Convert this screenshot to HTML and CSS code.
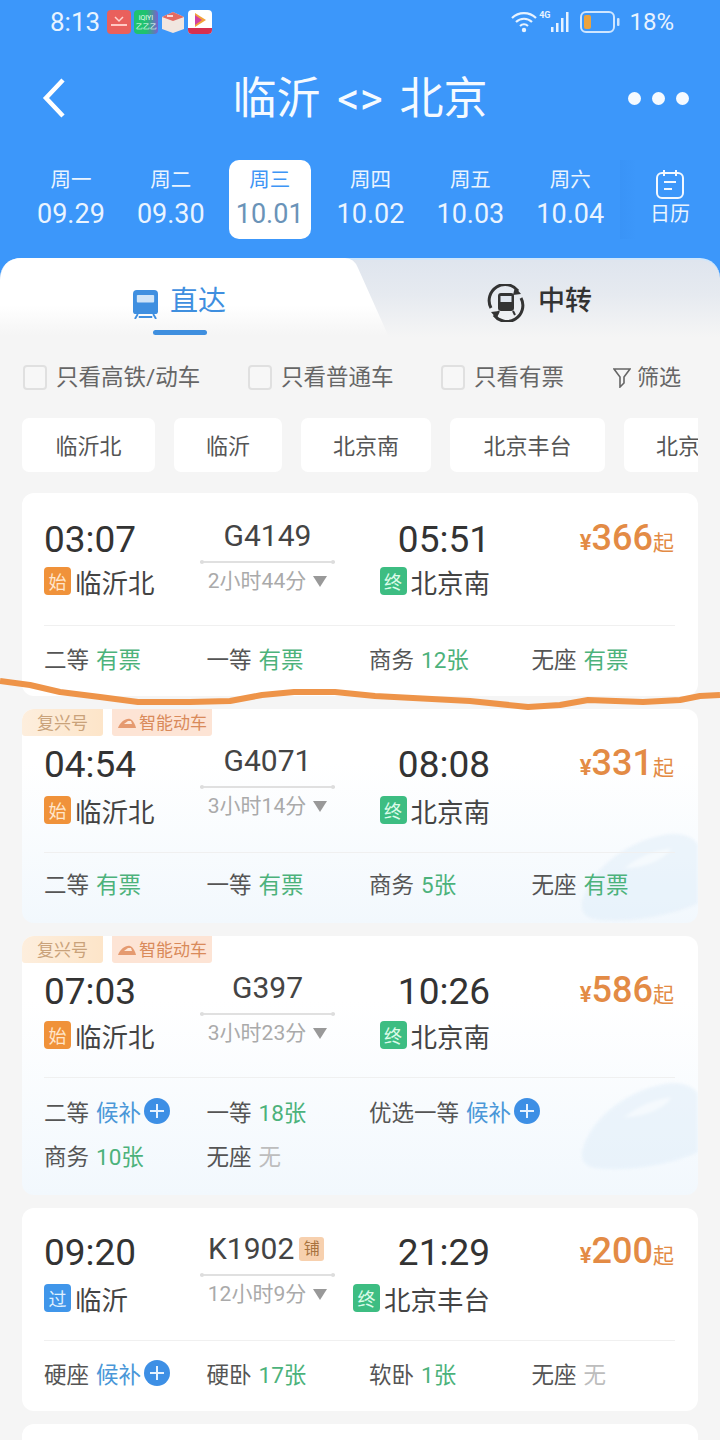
FILE: index.html
```html
<!DOCTYPE html>
<html lang="zh">
<head>
<meta charset="utf-8">
<title>临沂 &lt;&gt; 北京</title>
<link rel="stylesheet" href="styles.css">
</head>
<body>
<div class="app">
  <header class="header">
    <div class="status">
      <span class="clock">8:13</span>
      <div class="apps">
        <svg class="app-icon" viewBox="0 0 24 24"><rect width="24" height="24" rx="4" fill="#e9605c"/><path d="M8 7l4 4 4-4" fill="none" stroke="#ffd5cf" stroke-width="1.5"/><rect x="4" y="14" width="16" height="2" fill="#ffc9c3"/></svg>
        <svg class="app-icon" viewBox="0 0 24 24"><defs><linearGradient id="iq" x1="0" x2="1"><stop offset="0.5" stop-color="#1fc26f"/><stop offset="1" stop-color="#7a5fd0"/></linearGradient></defs><rect width="24" height="24" rx="4" fill="url(#iq)"/><text x="12" y="10" font-size="7" fill="#e8fff2" text-anchor="middle" font-family="Roboto">iQIYI</text><text x="12" y="19" font-size="7" fill="#e8fff2" text-anchor="middle" font-family="Roboto">乙乙乙</text></svg>
        <svg class="app-icon" viewBox="0 0 24 24"><path d="M1 7l11-5 11 5v12l-11 4-11-4z" fill="#f1e6e0"/><path d="M1 7l11-5 11 5-11 4z" fill="#e46a62"/><path d="M6 6h6" stroke="#fff" stroke-width="1.5"/></svg>
        <svg class="app-icon" viewBox="0 0 24 24"><rect width="24" height="24" rx="4" fill="#fff"/><path d="M0 18h24v2a4 4 0 0 1-4 4H4a4 4 0 0 1-4-4z" fill="#d6304f"/><path d="M7 3l11 7-11 7z" fill="#f2a23a"/><path d="M7 5l7 5-7 5z" fill="#d23fa0"/></svg>
      </div>
      <div class="status-right">
        <svg class="wifi" viewBox="0 0 26 22"><g fill="none" stroke="#e8f3ff" stroke-width="2.2"><path d="M1 7a17 17 0 0 1 24 0"/><path d="M5 11a11.500 11.500 0 0 1 16 0"/><path d="M9 15a6 6 0 0 1 8 0"/></g><circle cx="13" cy="19" r="2.200" fill="#e8f3ff"/></svg>
        <span class="net">4G</span>
        <svg class="signal" viewBox="0 0 20 20"><g fill="#e8f3ff"><rect x="0" y="15" width="2.500" height="5"/><rect x="5" y="11" width="2.500" height="9"/><rect x="10" y="6" width="2.500" height="14"/><rect x="15" y="0" width="2.500" height="20"/></g></svg>
        <svg class="battery" viewBox="0 0 40 22"><rect x="1" y="1" width="33" height="20" rx="5" fill="none" stroke="#cfe6ff" stroke-width="2"/><rect x="4" y="4" width="7" height="14" rx="2" fill="#eda33c"/><rect x="37" y="7" width="2.500" height="8" rx="1" fill="#cfe6ff"/></svg>
        <span class="percent">18%</span>
      </div>
    </div>
    <nav class="nav">
      <svg class="back" viewBox="0 0 24 40"><path d="M21 2L4 20l17 18" fill="none" stroke="#fff" stroke-width="4.500"/></svg>
      <h1 class="title">临沂 &lt;&gt; 北京</h1>
      <div class="more"><i></i><i></i><i></i></div>
    </nav>
    <div class="dates">
      <div class="date"><span class="week">周一</span><span class="day">09.29</span></div>
      <div class="date"><span class="week">周二</span><span class="day">09.30</span></div>
      <div class="date is-active"><span class="week">周三</span><span class="day">10.01</span></div>
      <div class="date"><span class="week">周四</span><span class="day">10.02</span></div>
      <div class="date"><span class="week">周五</span><span class="day">10.03</span></div>
      <div class="date"><span class="week">周六</span><span class="day">10.04</span></div>
      <div class="calendar">
        <svg class="cal-icon" viewBox="0 0 28 30"><g fill="none" stroke="#f2f8ff" stroke-width="2"><rect x="1" y="4" width="26" height="25" rx="5"/><path d="M8 1v6M20 1v6M8 13h12M8 20h8"/></g></svg>
        <span class="cal-text">日历</span>
      </div>
    </div>
  </header>

  <div class="tabs">
    <div class="tabs-inner">
      <div class="tab-direct">
        <div class="tab-label">
          <svg class="tab-icon" viewBox="0 0 26 30"><path d="M4 0h18a4 4 0 0 1 4 4v18a3 3 0 0 1-3 3H3a3 3 0 0 1-3-3V4a4 4 0 0 1 4-4z" fill="#3f8fe0"/><rect x="4" y="5" width="18" height="8" rx="1" fill="#cfe4f8"/><path d="M5 25l-3 5M21 25l3 5M6 28h14" stroke="#3f8fe0" stroke-width="2" fill="none"/></svg>
          <span class="tab-text">直达</span>
        </div>
        <div class="tab-line"></div>
      </div>
      <div class="tab-transfer">
        <svg class="transfer-icon" viewBox="0 0 38 38"><g fill="none" stroke="#333" stroke-width="3"><path d="M4 24A16 16 0 0 1 31 7"/><path d="M34 14A16 16 0 0 1 7 31"/></g><path d="M28 3l6 7-8 1zM10 35l-6-7 8-1z" fill="#333"/><rect x="11" y="9" width="16" height="18" rx="3" fill="#333"/><rect x="13.500" y="12" width="11" height="6" fill="#dfe5ee"/><path d="M12 27l-2 4M26 27l2 4" stroke="#333" stroke-width="2"/></svg>
        <span class="transfer-text">中转</span>
      </div>
    </div>
  </div>

  <div class="filters">
    <label class="check check-high"><i class="box"></i>只看高铁/动车</label>
    <label class="check check-normal"><i class="box"></i>只看普通车</label>
    <label class="check check-ticket"><i class="box"></i>只看有票</label>
    <div class="sift">
      <svg class="funnel" viewBox="0 0 18 20"><path d="M1 1h16l-6 8v6l-4 4V9z" fill="none" stroke="#666" stroke-width="1.600"/></svg>
      <span>筛选</span>
    </div>
  </div>

  <div class="chips">
    <div class="chip">临沂北</div>
    <div class="chip">临沂</div>
    <div class="chip">北京南</div>
    <div class="chip">北京丰台</div>
    <div class="chip chip-last">北京西</div>
  </div>

  <main class="list">
    <article class="card card-one">
      <div class="trip">
        <div class="side">
          <div class="time">03:07</div>
          <div class="station"><b class="tag tag-start">始</b>临沂北</div>
        </div>
        <div class="mid">
          <div class="train">G4149</div>
          <div class="rail"></div>
          <div class="duration">2小时44分<i class="caret"></i></div>
        </div>
        <div class="side side-end">
          <div class="time">05:51</div>
          <div class="station"><b class="tag tag-end">终</b>北京南</div>
        </div>
        <div class="price"><span class="yen">¥</span><span class="amount">366</span><span class="from">起</span></div>
      </div>
      <div class="seats">
        <div class="seat">二等<span class="ok">有票</span></div>
        <div class="seat">一等<span class="ok">有票</span></div>
        <div class="seat">商务<span class="ok">12张</span></div>
        <div class="seat">无座<span class="ok">有票</span></div>
      </div>
    </article>

    <article class="card card-two card-fast">
      <div class="badges"><span class="badge badge-fx">复兴号</span><span class="badge badge-ai"><svg class="badge-train" viewBox="0 0 20 12"><path d="M1 11C3 5 9 1 13 2c3 1 5 5 6 9z" fill="#e59a70"/><path d="M7 7l4-3h3l1 3z" fill="#fde8da"/></svg>智能动车</span></div>
      <svg class="water water-two" viewBox="0 0 120 95"><path d="M2 72C10 40 45 12 85 4c18-3 30 2 35 10v60c-30 14-80 20-105 16C5 88 0 82 2 72z" fill="#dcebf8"/><path d="M45 38c16-12 30-18 48-20-6 10-26 20-48 20z" fill="#f2f8fd"/></svg>
      <div class="trip">
        <div class="side">
          <div class="time">04:54</div>
          <div class="station"><b class="tag tag-start">始</b>临沂北</div>
        </div>
        <div class="mid">
          <div class="train">G4071</div>
          <div class="rail"></div>
          <div class="duration">3小时14分<i class="caret"></i></div>
        </div>
        <div class="side side-end">
          <div class="time">08:08</div>
          <div class="station"><b class="tag tag-end">终</b>北京南</div>
        </div>
        <div class="price"><span class="yen">¥</span><span class="amount">331</span><span class="from">起</span></div>
      </div>
      <div class="seats">
        <div class="seat">二等<span class="ok">有票</span></div>
        <div class="seat">一等<span class="ok">有票</span></div>
        <div class="seat">商务<span class="ok">5张</span></div>
        <div class="seat">无座<span class="ok">有票</span></div>
      </div>
    </article>

    <article class="card card-three card-fast">
      <div class="badges"><span class="badge badge-fx">复兴号</span><span class="badge badge-ai"><svg class="badge-train" viewBox="0 0 20 12"><path d="M1 11C3 5 9 1 13 2c3 1 5 5 6 9z" fill="#e59a70"/><path d="M7 7l4-3h3l1 3z" fill="#fde8da"/></svg>智能动车</span></div>
      <svg class="water water-three" viewBox="0 0 120 95"><path d="M2 72C10 40 45 12 85 4c18-3 30 2 35 10v60c-30 14-80 20-105 16C5 88 0 82 2 72z" fill="#dcebf8"/><path d="M45 38c16-12 30-18 48-20-6 10-26 20-48 20z" fill="#f2f8fd"/></svg>
      <div class="trip">
        <div class="side">
          <div class="time">07:03</div>
          <div class="station"><b class="tag tag-start">始</b>临沂北</div>
        </div>
        <div class="mid">
          <div class="train">G397</div>
          <div class="rail"></div>
          <div class="duration">3小时23分<i class="caret"></i></div>
        </div>
        <div class="side side-end">
          <div class="time">10:26</div>
          <div class="station"><b class="tag tag-end">终</b>北京南</div>
        </div>
        <div class="price"><span class="yen">¥</span><span class="amount">586</span><span class="from">起</span></div>
      </div>
      <div class="seats">
        <div class="seat">二等<span class="wait">候补</span><i class="plus"></i></div>
        <div class="seat">一等<span class="ok">18张</span></div>
        <div class="seat seat-wide">优选一等<span class="wait">候补</span><i class="plus"></i></div>
        <div class="seat">商务<span class="ok">10张</span></div>
        <div class="seat">无座<span class="none">无</span></div>
      </div>
    </article>

    <article class="card card-four">
      <div class="trip">
        <div class="side">
          <div class="time">09:20</div>
          <div class="station"><b class="tag tag-pass">过</b>临沂</div>
        </div>
        <div class="mid">
          <div class="train train-left">K1902<b class="berth">铺</b></div>
          <div class="rail"></div>
          <div class="duration">12小时9分<i class="caret"></i></div>
        </div>
        <div class="side side-end">
          <div class="time">21:29</div>
          <div class="station"><b class="tag tag-end">终</b>北京丰台</div>
        </div>
        <div class="price"><span class="yen">¥</span><span class="amount">200</span><span class="from">起</span></div>
      </div>
      <div class="seats">
        <div class="seat">硬座<span class="wait">候补</span><i class="plus"></i></div>
        <div class="seat">硬卧<span class="ok">17张</span></div>
        <div class="seat">软卧<span class="ok">1张</span></div>
        <div class="seat">无座<span class="none">无</span></div>
      </div>
    </article>

    <article class="card card-five"></article>
  </main>

  <svg class="scribble" viewBox="0 0 720 40"><path d="M0 4L30 8 60 15 100 20 138 25 190 25 230 24 262 18 294 15 335 15 375 19 413 21 470 24 528 30 560 28 588 23 643 25 680 23 700 19 720 18" fill="none" stroke="#ee9449" stroke-width="6" stroke-linejoin="round"/></svg>
</div>
</body>
</html>
```

FILE: styles.css
```css
* { box-sizing: border-box; margin: 0; padding: 0; }
html, body { height: 1440px; overflow: hidden; }
body {
  background: #f5f5f5;
  font-family: Roboto, "Noto Sans CJK SC", sans-serif;
  color: #444;
}
.app { position: relative; width: 720px; height: 1440px; overflow: hidden; }

/* header */
.header { background: #3c97fa; height: 258px; color: #fff; }
.status { display: flex; align-items: center; height: 46px; padding: 0 46px 2px 50px; color: #e8f3ff; }
.clock { font-size: 26px; line-height: 1; }
.apps { display: flex; gap: 3px; margin-left: 7px; }
.app-icon { width: 24px; height: 24px; display: block; }
.status-right { display: flex; align-items: center; margin-left: auto; }
.wifi { width: 26px; height: 22px; display: block; }
.net { font-size: 9px; font-weight: 700; align-self: flex-start; margin: 0 0 0 2px; }
.signal { width: 20px; height: 20px; margin-left: 1px; display: block; }
.battery { width: 40px; height: 22px; margin-left: 9px; display: block; }
.percent { font-size: 24px; line-height: 1; margin-left: 9px; }

.nav { position: relative; display: flex; align-items: center; justify-content: space-between; height: 104px; padding: 0 31px 0 42px; }
.back { width: 24px; height: 40px; display: block; }
.title { position: absolute; left: 0; right: 0; text-align: center; font-size: 44px; font-weight: 400; line-height: 60px; word-spacing: 6px; color: #f5faff; margin-top: 2px; }
.more { display: flex; gap: 11px; }
.more i { width: 13px; height: 13px; border-radius: 50%; background: #f5faff; display: block; }

.dates { display: flex; padding: 10px 0 0 21px; align-items: flex-start; }
.date { width: 100px; display: flex; flex-direction: column; align-items: center; height: 79px; }
.week { font-size: 20.500px; line-height: 28px; margin-top: 6px; color: #eaf4ff; }
.day { font-size: 27px; line-height: 36px; margin-top: 2px; color: #eaf4ff; }
.date.is-active { width: 82px; margin: 0 10px 0 8px; background: #fff; border-radius: 10px; }
.date.is-active .week { color: #3e95f5; }
.date.is-active .day { color: #6a93b8; }
.calendar { width: 100px; height: 79px; display: flex; flex-direction: column; align-items: center; background: linear-gradient(90deg, rgba(50,135,235,.22), rgba(60,151,250,0) 16%); }
.cal-icon { width: 28px; height: 30px; display: block; margin-top: 9px; }
.cal-text { font-size: 20px; line-height: 28px; margin-top: 1px; color: #eaf4ff; }

/* tabs */
.tabs { background: #3c97fa; }
.tabs-inner {
  display: flex;
  height: 88px;
  border-radius: 20px 20px 0 0;
  background: linear-gradient(180deg, #dfe5ee 0%, #e6eaf0 40%, #f5f5f5 90%);
  border-top: 2px solid #cfe6fb;
}
.tab-direct {
  width: 392px;
  height: 86px;
  margin-top: -2px;
  padding: 24px 0 0 133px;
  background: linear-gradient(180deg, #fff 0%, #fff 55%, #f5f5f5 90%);
  clip-path: path("M0 22Q2 0 22 0L345 0Q354 0 358 10L392 86L0 86Z");
}
.tab-label { display: flex; align-items: center; height: 40px; gap: 12px; }
.tab-icon { width: 25px; height: 29px; display: block; margin-top: 4px; }
.tab-text { font-size: 28px; line-height: 40px; color: #3f8fdf; }
.tab-line { width: 54px; height: 5px; border-radius: 3px; background: #3f8fdf; margin: 8px 0 0 20px; }
.tab-transfer { display: flex; align-items: flex-start; gap: 13px; padding: 24px 0 0 95px; }
.transfer-icon { width: 38px; height: 38px; display: block; }
.transfer-text { font-size: 27px; line-height: 34px; font-weight: 500; color: #333; }

/* filters */
.filters { display: flex; align-items: center; height: 40px; margin-top: 9px; padding-left: 23px; font-size: 22.500px; color: #666; }
.check { display: flex; align-items: center; gap: 9px; }
.check-high { width: 225px; }
.check-normal { width: 193px; }
.check-ticket { width: 172px; }
.box { width: 24px; height: 25px; margin-top: 5px; border: 2px solid #e0e0e0; border-radius: 4px; background: #f7f7f7; display: block; flex: none; }
.sift { display: flex; align-items: center; gap: 6px; font-size: 22px; }
.funnel { width: 18px; height: 20px; display: block; margin-top: 5px; }

.chips { display: grid; grid-template-columns: 133px 108px 130px 155px 100px; gap: 19px; margin: 23px 22px 0; height: 54px; overflow: hidden; }
.chip { background: #fff; border-radius: 7px; display: flex; align-items: center; justify-content: center; padding-bottom: 3px; font-size: 22px; color: #555; }
.chip-last { justify-content: flex-start; padding-left: 32px; white-space: nowrap; }

/* cards */
.list { display: flex; flex-direction: column; gap: 13px; margin: 21px 22px 0; }
.card { position: relative; background: #fff; border-radius: 12px; padding: 0 23px 0 22px; overflow: hidden; }
.card-fast { background: linear-gradient(180deg, #fff 25%, #f2f8fd 100%); }
.card-five { height: 120px; }

.trip { position: relative; display: grid; grid-template-columns: 156px 135px 155px 1fr; padding-top: var(--top); padding-bottom: 28px; }
.card-one { --top: 24px; --gap: 4px; }
.card-two { --top: 33px; --gap: 8px; }
.card-three { --top: 33px; --gap: 6px; }
.card-four { --top: 22px; --gap: 8px; }
.card-one .trip { padding-bottom: 30px; }

.side { display: flex; flex-direction: column; align-items: flex-start; }
.side-end { align-items: flex-end; }
.time { font-size: 37px; line-height: 46px; color: #333; }
.station { display: flex; align-items: center; gap: 4px; height: 28px; margin-top: var(--gap); font-size: 26.500px; color: #444; white-space: nowrap; }
.tag { width: 27px; height: 28px; border-radius: 4px; display: flex; align-items: center; justify-content: center; font-size: 18px; font-weight: 400; color: #fff; }
.tag-start { background: #f0923a; color: #ffe6cc; }
.tag-end { background: #3dbd82; color: #dcfbe9; }
.tag-pass { background: #4096ea; color: #dff0ff; }

.mid { display: flex; flex-direction: column; align-items: center; }
.train { display: flex; align-items: center; font-size: 30px; line-height: 38px; color: #444; }
.train-left { align-self: flex-start; padding-left: 8px; }
.berth { width: 25px; height: 24px; margin-left: 5px; border-radius: 3px; background: #f7d0ae; color: #a8733f; font-size: 16px; font-weight: 400; display: flex; align-items: center; justify-content: center; }
.rail { position: relative; width: 135px; height: 2px; margin-top: 6px; background: #e0e0e0; }
.rail::before, .rail::after { content: ""; position: absolute; top: -1px; width: 4px; height: 4px; border-radius: 50%; background: #ddd; }
.rail::before { left: 0; }
.rail::after { right: 0; }
.duration { display: flex; align-items: center; font-size: 21px; line-height: 28px; margin-top: 4px; color: #aaa; white-space: nowrap; }
.caret { width: 0; height: 0; margin-left: 7px; border-left: 7.500px solid transparent; border-right: 7.500px solid transparent; border-top: 11px solid #999; }

.price { display: flex; justify-content: flex-end; align-items: baseline; line-height: 42px; height: 42px; padding-right: 1px; color: #e38b45; }
.yen { font-size: 22px; font-weight: 700; }
.amount { font-size: 36px; font-weight: 500; }
.from { font-size: 21px; }

.seats { position: relative; display: grid; grid-template-columns: repeat(4, 162.500px); border-top: 1px solid #f0f0f0; row-gap: 14px; }
.card-one .seats { padding: 17px 0 23px; }
.card-two .seats { padding: 15px 0 25px; }
.card-three .seats { padding: 18px 0 25px; }
.card-four .seats { padding: 17px 0 23px; }
.seat { display: flex; align-items: center; height: 30px; font-size: 22.500px; color: #555; white-space: nowrap; }
.seat-wide { grid-column: span 2; }
.seat span { margin-left: 7px; }
.ok { color: #4cb27b; }
.wait { color: #4a97d8; }
.none { color: #bdbdbd; }
.plus { position: relative; width: 26px; height: 26px; margin-left: 3px; border-radius: 50%; background: #3d8fe5; display: block; flex: none; }
.plus::before, .plus::after { content: ""; position: absolute; background: #e6f2ff; }
.plus::before { left: 6px; right: 6px; top: 12px; height: 2px; }
.plus::after { top: 6px; bottom: 6px; left: 12px; width: 2px; }

.badges { position: absolute; left: 0; top: 0; display: flex; gap: 9px; z-index: 1; }
.badge { display: flex; align-items: center; justify-content: center; height: 27px; padding-bottom: 3px; font-size: 17px; border-radius: 0 0 3px 3px; }
.badge-fx { width: 81px; background: linear-gradient(90deg, #fdeedd, #fde5c9); color: #c9a27a; }
.badge-ai { width: 100px; gap: 2px; background: #fde4d5; color: #d98a5a; }
.badge-train { width: 20px; height: 12px; display: block; margin-top: 4px; }

.water { position: absolute; right: 0; width: 118px; height: 93px; filter: blur(1.500px); opacity: .45; }
.water-two { top: 122px; }
.water-three { top: 144px; }

.scribble { position: absolute; left: 0; top: 677px; width: 720px; height: 40px; }
```
